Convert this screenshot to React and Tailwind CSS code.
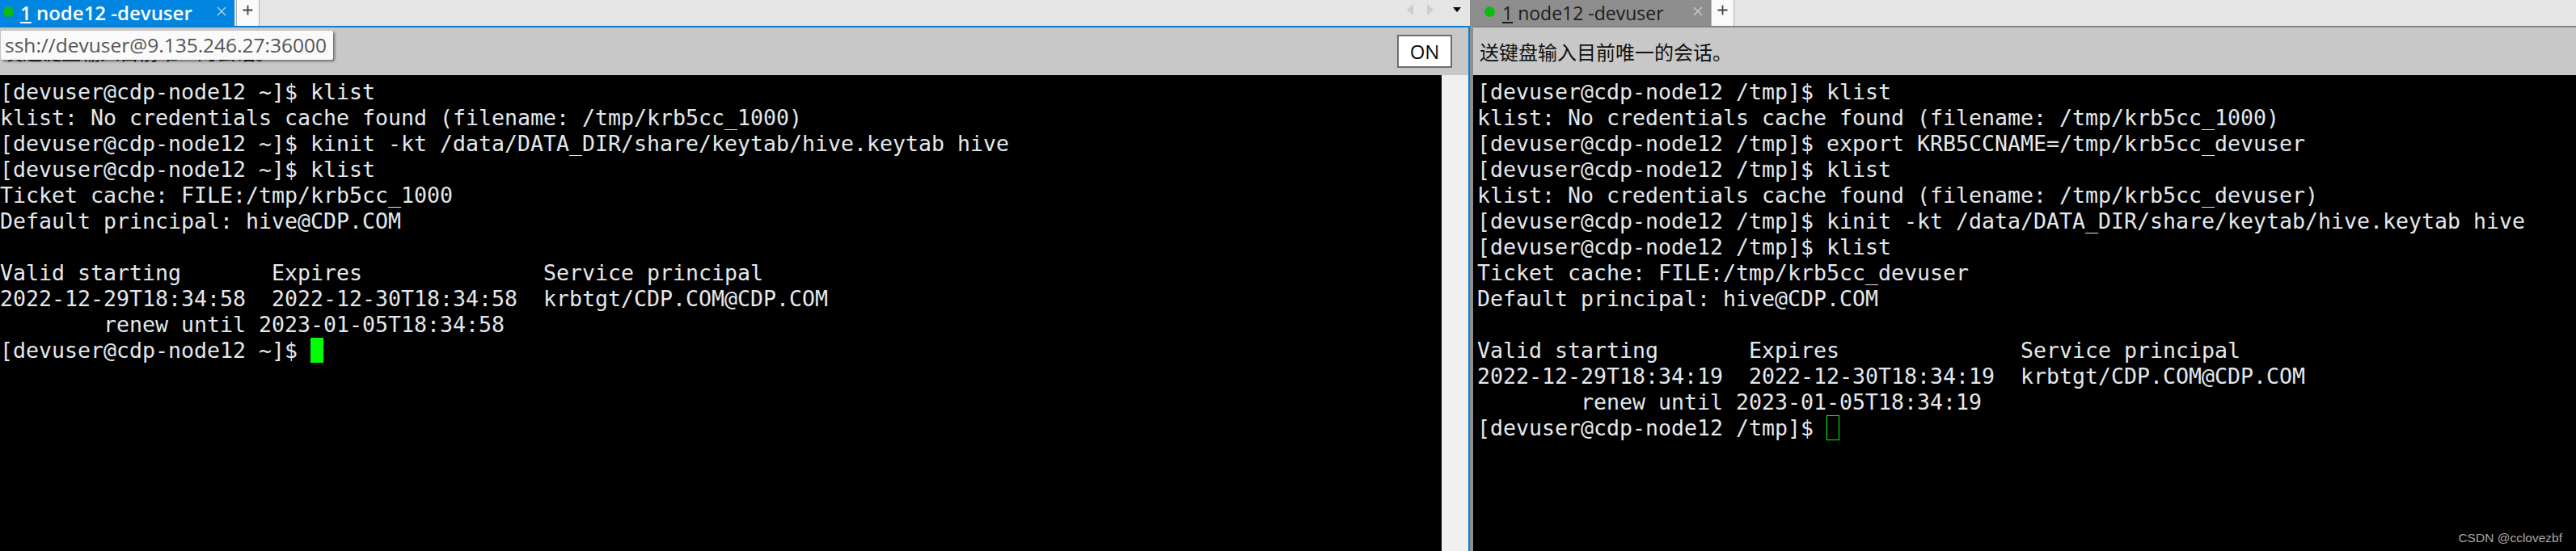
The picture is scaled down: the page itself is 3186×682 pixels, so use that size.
const leftLines = [
  "[devuser@cdp-node12 ~]$ klist",
  "klist: No credentials cache found (filename: /tmp/krb5cc_1000)",
  "[devuser@cdp-node12 ~]$ kinit -kt /data/DATA_DIR/share/keytab/hive.keytab hive",
  "[devuser@cdp-node12 ~]$ klist",
  "Ticket cache: FILE:/tmp/krb5cc_1000",
  "Default principal: hive@CDP.COM",
  " ",
  "Valid starting       Expires              Service principal",
  "2022-12-29T18:34:58  2022-12-30T18:34:58  krbtgt/CDP.COM@CDP.COM",
  "        renew until 2023-01-05T18:34:58",
];

const rightLines = [
  "[devuser@cdp-node12 /tmp]$ klist",
  "klist: No credentials cache found (filename: /tmp/krb5cc_1000)",
  "[devuser@cdp-node12 /tmp]$ export KRB5CCNAME=/tmp/krb5cc_devuser",
  "[devuser@cdp-node12 /tmp]$ klist",
  "klist: No credentials cache found (filename: /tmp/krb5cc_devuser)",
  "[devuser@cdp-node12 /tmp]$ kinit -kt /data/DATA_DIR/share/keytab/hive.keytab hive",
  "[devuser@cdp-node12 /tmp]$ klist",
  "Ticket cache: FILE:/tmp/krb5cc_devuser",
  "Default principal: hive@CDP.COM",
  " ",
  "Valid starting       Expires              Service principal",
  "2022-12-29T18:34:19  2022-12-30T18:34:19  krbtgt/CDP.COM@CDP.COM",
  "        renew until 2023-01-05T18:34:19",
];

function TabLabel({ active }) {
  return (
    <span
      className={
        active
          ? "font-['Open_Sans',sans-serif] text-[24px] font-semibold leading-[30px] text-white whitespace-pre"
          : "font-['Open_Sans',sans-serif] text-[23px] font-normal leading-[30px] text-[#1c1c1c] whitespace-pre"
      }
    >
      <span className="underline underline-offset-2">1</span> node12 -devuser
    </span>
  );
}

function CloseX({ color }) {
  return (
    <svg width="12" height="12" viewBox="0 0 12 12" className="mb-[4px] shrink-0">
      <path d="M1 1L11 11M11 1L1 11" stroke={color} strokeWidth="1.2" fill="none" />
    </svg>
  );
}

function PlusTab() {
  return (
    <div className="flex h-[32px] w-[29px] items-center justify-center border-l border-r border-[#b4b4b4] bg-[#fafafa] pb-[8px]">
      <svg width="13" height="13" viewBox="0 0 13 13">
        <path d="M6.5 0.5V12.5M0.5 6.5H12.5" stroke="#444444" strokeWidth="1.8" fill="none" />
      </svg>
    </div>
  );
}

function Dot() {
  return <span className="mb-[4px] h-[13px] w-[13px] shrink-0 rounded-full bg-[#0cbc0c]" />;
}

function Terminal({ lines, prompt, cursorClass }) {
  return (
    <div className="flex-1 bg-black pt-[5px] font-['DejaVu_Sans_Mono',monospace] text-[26.58px] leading-[32px] text-[#e4e8ec] whitespace-pre">
      {lines.map((l, i) => (
        <div key={i} className="h-[32px]">
          {l}
        </div>
      ))}
      <div className="flex h-[32px] items-start">
        <span>{prompt}</span>
        <span className={cursorClass} />
      </div>
    </div>
  );
}

export default function App() {
  return (
    <div className="relative flex h-[682px] w-[3186px] overflow-hidden bg-[#c8c8c8]">
      {/* left pane */}
      <div className="flex h-full w-[1822px] shrink-0 flex-col border-r-[4px] border-[#8e8e8e] bg-[#c8c8c8]">
        <div className="flex h-[32px] shrink-0 items-center bg-[#e5e5e5]">
          <div className="flex h-[32px] w-[290px] items-center bg-[#0086e0] pl-[4px]">
            <Dot />
            <span className="ml-[8px] w-[243px]">
              <TabLabel active />
            </span>
            <CloseX color="#b8d8f2" />
          </div>
          <span className="w-[2px]" />
          <PlusTab />
          <div className="flex flex-1 items-center justify-end pb-[8px] pr-[11px]">
            <svg width="8" height="14" viewBox="0 0 8 14" className="mr-[17px]">
              <path d="M8 0V14L0 7Z" fill="#cdcdcd" />
            </svg>
            <svg width="8" height="14" viewBox="0 0 8 14" className="mr-[24px]">
              <path d="M0 0V14L8 7Z" fill="#cdcdcd" />
            </svg>
            <svg width="10" height="6" viewBox="0 0 10 6">
              <path d="M0 0H10L5 6Z" fill="#000000" />
            </svg>
          </div>
        </div>
        <div className="flex min-h-0 flex-1 flex-col border-t-2 border-r-2 border-[#0a7fd0]">
          <div className="flex h-[59px] shrink-0 items-center justify-between bg-[#c8c8c8] pr-[20px]">
            <span className="pl-[4px] font-['Noto_Sans_CJK_SC',sans-serif] text-[24px] text-[#111111] whitespace-pre">
              发送键盘输入目前唯一的会话。
            </span>
            <div className="flex h-[41px] w-[68px] items-center justify-center border-2 border-[#6e6e6e] bg-white font-['Open_Sans',sans-serif] text-[24px] text-[#0a0a0a]">
              ON
            </div>
          </div>
          <div className="flex min-h-0 flex-1">
            <Terminal
              lines={leftLines}
              prompt="[devuser@cdp-node12 ~]$ "
              cursorClass="block h-[31px] w-[16px] bg-[#00ff00]"
            />
            <div className="w-[33px] shrink-0 bg-[#f0f0f0]" />
          </div>
        </div>
      </div>

      {/* right pane */}
      <div className="flex h-full min-w-0 flex-1 flex-col">
        <div className="flex h-[32px] shrink-0 items-center bg-[#e5e5e5]">
          <div className="flex h-[32px] w-[294px] items-center bg-[#8e8e8e] pl-[14px]">
            <Dot />
            <span className="ml-[9px] w-[236px]">
              <TabLabel />
            </span>
            <CloseX color="#cfcfcf" />
          </div>
          <PlusTab />
        </div>
        <div className="h-[2px] shrink-0 bg-[#828282]" />
        <div className="flex h-[59px] shrink-0 items-center bg-[#c8c8c8] pl-[8px]">
          <span className="font-['Noto_Sans_CJK_SC',sans-serif] text-[24px] text-[#111111] whitespace-pre">
            送键盘输入目前唯一的会话。
          </span>
        </div>
        <div className="flex min-h-0 flex-1 bg-black pl-[5px]">
          <Terminal
            lines={rightLines}
            prompt="[devuser@cdp-node12 /tmp]$ "
            cursorClass="block h-[31px] w-[16px] border border-[#00ff00]"
          />
        </div>
      </div>

      {/* tooltip over the tab strip */}
      <div className="absolute left-[1px] top-[38px] flex h-[36px] w-[411px] items-center rounded-[2px] bg-[#fafafa] pl-[5px] font-['Open_Sans',sans-serif] text-[24.5px] text-[#555555] shadow-[2px_2px_3px_rgba(0,0,0,0.45)] whitespace-pre">
        ssh://devuser@9.135.246.27:36000
      </div>

      {/* watermark */}
      <div className="absolute bottom-[5px] right-[17px] font-['Liberation_Sans',sans-serif] text-[15.5px] text-[#a8a8a8]">
        CSDN @cclovezbf
      </div>
    </div>
  );
}
